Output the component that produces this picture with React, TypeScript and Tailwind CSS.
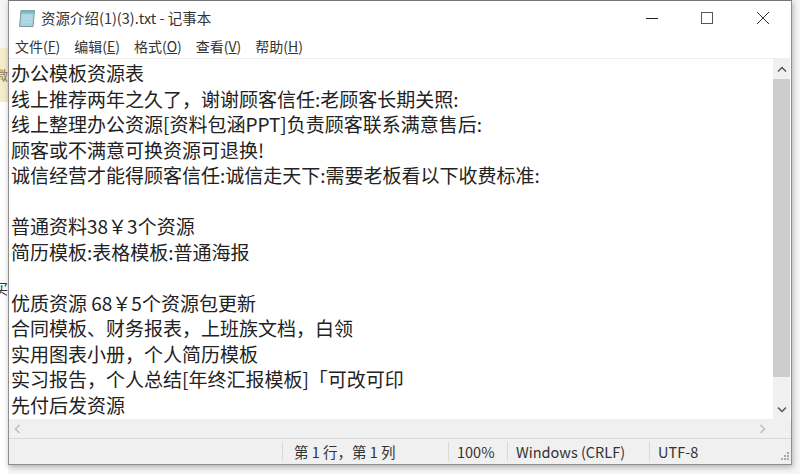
const lines = [
  '办公模板资源表',
  '线上推荐两年之久了，谢谢顾客信任:老顾客长期关照:',
  '线上整理办公资源[资料包涵PPT]负责顾客联系满意售后:',
  '顾客或不满意可换资源可退换!',
  '诚信经营才能得顾客信任:诚信走天下:需要老板看以下收费标准:',
  '',
  '普通资料38￥3个资源',
  '简历模板:表格模板:普通海报',
  '',
  '优质资源 68￥5个资源包更新',
  '合同模板、财务报表，上班族文档，白领',
  '实用图表小册，个人简历模板',
  '实习报告，个人总结[年终汇报模板]「可改可印',
  '先付后发资源',
]

const menus = [
  ['文件(', 'F', ')'],
  ['编辑(', 'E', ')'],
  ['格式(', 'O', ')'],
  ['查看(', 'V', ')'],
  ['帮助(', 'H', ')'],
]

const NotepadIcon = () => (
  <svg width="18" height="19" viewBox="0 0 18 19">
    <path d="M3 1.5h13.5l-1.5 16H1.5z" fill="#a9d3de" stroke="#7f9aa3" strokeWidth="1" />
    <path d="M3 1.5h13.5l-.4 3H2.7z" fill="#7fb3c6" />
    <path d="M5 7h9M4.700 10h9M4.400 13h9" stroke="#c4e2ea" strokeWidth="1" />
  </svg>
)

const App = () => {
  return (
    <div className="flex h-[474px] w-[800px] overflow-hidden bg-[#f6f6f6] font-['Noto_Sans_CJK_SC','Liberation_Sans',sans-serif] text-[#222]">
      <div className="flex w-2 flex-col pt-12">
        <div className="flex h-[54px] items-center justify-end overflow-hidden bg-[#f5eccb] text-[13px] text-[#8a7a4a]">
          <span className="shrink-0">微</span>
        </div>
        <div className="flex h-[197px] items-end justify-end overflow-hidden bg-white text-[14px] text-[#333]">
          <span className="shrink-0">买</span>
        </div>
        <div className="flex-1 bg-white" />
      </div>

      <div className="flex h-[465px] w-[784px] flex-col border border-[#8e8e8e] border-t-[#777] bg-white shadow-[1px_2px_6px_rgba(0,0,0,0.3)]">
        <div className="flex h-[34px] shrink-0 items-center pl-[9px]">
          <NotepadIcon />
          <span className="ml-[5px] text-[14.5px] text-[#333]">资源介绍(1)(3).txt - 记事本</span>
          <div className="ml-auto flex items-center pr-[21px]">
            <svg width="14" height="14" viewBox="0 0 14 14" className="mr-[41px]">
              <path d="M1 7.500h12" stroke="#222" strokeWidth="1" />
            </svg>
            <svg width="14" height="14" viewBox="0 0 14 14" className="mr-[42px]">
              <rect x="1.500" y="1.500" width="11" height="11" fill="none" stroke="#555" strokeWidth="1" />
            </svg>
            <svg width="14" height="14" viewBox="0 0 14 14">
              <path d="M1 1l12 12M13 1L1 13" stroke="#333" strokeWidth="1" />
            </svg>
          </div>
        </div>

        <div className="flex h-[24px] shrink-0 items-center gap-[14px] border-b border-[#eeeeee] pl-[6px] text-[14px] text-[#333]">
          {menus.map((m) => (
            <span key={m[0]}>
              {m[0]}
              <span className="underline">{m[1]}</span>
              {m[2]}
            </span>
          ))}
        </div>

        <div className="flex min-h-0 flex-1">
          <div className="flex-1 overflow-hidden pl-[2px] pt-px text-[19px] leading-[25.5px] text-[#222]">
            {lines.map((l, i) => (
              <div key={i} className="h-[25.5px] whitespace-nowrap">
                {l}
              </div>
            ))}
          </div>
          <div className="mr-px flex w-[17px] shrink-0 flex-col bg-[#f0f0f0]">
            <div className="flex h-5 items-center justify-center">
              <svg width="10" height="7" viewBox="0 0 10 7">
                <path d="M1 5.500l4-4 4 4" fill="none" stroke="#555" strokeWidth="1.500" />
              </svg>
            </div>
            <div className="h-[298px] bg-[#cdcdcd]" />
            <div className="mt-auto flex h-5 items-center justify-center">
              <svg width="10" height="7" viewBox="0 0 10 7">
                <path d="M1 1.500l4 4 4-4" fill="none" stroke="#555" strokeWidth="1.500" />
              </svg>
            </div>
          </div>
        </div>

        <div className="flex h-[19px] shrink-0 items-center justify-between bg-[#f0f0f0] pl-[5px] pr-[25px]">
          <svg width="7" height="10" viewBox="0 0 7 10">
            <path d="M5.500 1l-4 4 4 4" fill="none" stroke="#bdbdbd" strokeWidth="1.500" />
          </svg>
          <svg width="7" height="10" viewBox="0 0 7 10">
            <path d="M1.500 1l4 4-4 4" fill="none" stroke="#bdbdbd" strokeWidth="1.500" />
          </svg>
        </div>

        <div className="flex h-[26px] shrink-0 items-center border-t border-[#d9d9d9] bg-[#f0f0f0] text-[14.5px] text-[#333]">
          <div className="w-[273px]" />
          <div className="h-[19px] w-[166px] border-l border-[#d9d9d9] pl-[11px] leading-[19px]">第 1 行，第 1 列</div>
          <div className="h-[19px] w-[59px] border-l border-[#d9d9d9] pl-[8px] leading-[19px]">100%</div>
          <div className="h-[19px] w-[142px] border-l border-[#d9d9d9] pl-[8px] leading-[19px]">Windows (CRLF)</div>
          <div className="h-[19px] flex-1 border-l border-[#d9d9d9] pl-[8px] leading-[19px]">UTF-8</div>
          <svg width="12" height="12" viewBox="0 0 12 12" className="mr-px mt-[10px] shrink-0">
            <path d="M9 1h2v2H9zM6 4h2v2H6zM9 4h2v2H9zM3 7h2v2H3zM6 7h2v2H6zM9 7h2v2H9z" fill="#a8a8a8" />
          </svg>
        </div>
      </div>
    </div>
  )
}

export default App
